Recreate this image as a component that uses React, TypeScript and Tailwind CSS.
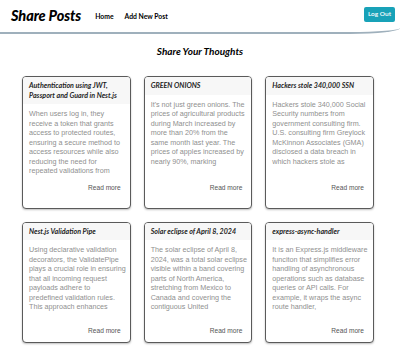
import React from "react";

type Post = { title: string; lines: string[] };

const posts: Post[] = [
  {
    title: "Authentication using JWT, Passport and Guard in Nest.js",
    lines: [
      "When users log in, they",
      "receive a token that grants",
      "access to protected routes,",
      "ensuring a secure method to",
      "access resources while also",
      "reducing the need for",
      "repeated validations from",
    ],
  },
  {
    title: "GREEN ONIONS",
    lines: [
      "It's not just green onions. The",
      "prices of agricultural products",
      "during March increased by",
      "more than 20% from the",
      "same month last year. The",
      "prices of apples increased by",
      "nearly 90%, marking",
    ],
  },
  {
    title: "Hackers stole 340,000 SSN",
    lines: [
      "Hackers stole 340,000 Social",
      "Security numbers from",
      "government consulting firm.",
      "U.S. consulting firm Greylock",
      "McKinnon Associates (GMA)",
      "disclosed a data breach in",
      "which hackers stole as",
    ],
  },
  {
    title: "Nest.js Validation Pipe",
    lines: [
      "Using declarative validation",
      "decorators, the ValidatePipe",
      "plays a crucial role in ensuring",
      "that all incoming request",
      "payloads adhere to",
      "predefined validation rules.",
      "This approach enhances",
    ],
  },
  {
    title: "Solar eclipse of April 8, 2024",
    lines: [
      "The solar eclipse of April 8,",
      "2024, was a total solar eclipse",
      "visible within a band covering",
      "parts of North America,",
      "stretching from Mexico to",
      "Canada and covering the",
      "contiguous United",
    ],
  },
  {
    title: "express-async-handler",
    lines: [
      "It is an Express.js middleware",
      "funciton that simplifies error",
      "handling of asynchronous",
      "operations such as database",
      "queries or API calls. For",
      "example, it wraps the async",
      "route handler,",
    ],
  },
];

function Card({ post, top }: { post: Post; top: boolean }) {
  return (
    <div className="flex flex-col rounded-[4px] border border-[#5a5a5a] bg-white shadow-[0_1px_2px_rgba(0,0,0,0.25)] overflow-hidden">
      <div
        className="bg-[#f7f7f7] px-[6px] py-[4px] text-[7.1px] leading-[9.5px] font-bold italic text-[#1e1e1e]"
        style={{ fontFamily: "Lato, 'Noto Sans', sans-serif" }}
      >
        {post.title}
      </div>
      <div className={`flex flex-1 flex-col pl-[6px] pr-[4px] pt-[5px] ${top ? "pb-[16px]" : "pb-[7px]"}`}>
        <p
          className="text-[7.2px] leading-[9.5px] text-[#8f8f8f] whitespace-nowrap"
          style={{ fontFamily: "'Liberation Sans', Arial, sans-serif" }}
        >
          {post.lines.map((l, i) => (
            <span key={i} className="block">
              {l}
            </span>
          ))}
        </p>
        <div
          className={`mt-auto ${top ? "pt-[7px]" : "pt-[14px]"} text-right text-[6.6px] leading-[9px] text-[#555] pr-[5px]`}
          style={{ fontFamily: "'Liberation Sans', Arial, sans-serif" }}
        >
          Read more
        </div>
      </div>
    </div>
  );
}

export default function App() {
  return (
    <div className="w-[400px] h-[356px] bg-white overflow-hidden" style={{ fontFamily: "Lato, sans-serif" }}>
      <header className="flex h-[34px] items-center border-b-2 border-[#9fb0bc] rounded-br-[50px_6px] pl-[11px] pr-[5px]">
        <div className="text-[14.5px] font-black italic text-black leading-none tracking-[-0.1px]">Share Posts</div>
        <nav className="ml-[14px] flex gap-[11px] text-[6.8px] font-bold text-black">
          <span>Home</span>
          <span>Add New Post</span>
        </nav>
        <button className="ml-auto mb-[4px] h-[15px] w-[31px] rounded-[2px] bg-[#18a2b8] text-[6.5px] font-semibold text-white">
          Log Out
        </button>
      </header>
      <h2 className="mt-[10px] text-center text-[10px] font-bold italic text-black leading-[14px]">
        Share Your Thoughts
      </h2>
      <div className="ml-[22px] mt-[18px] grid w-[352px] grid-cols-3 gap-x-[13px] gap-y-[13px]">
        {posts.map((p, i) => (
          <Card key={p.title} post={p} top={i < 3} />
        ))}
      </div>
    </div>
  );
}
